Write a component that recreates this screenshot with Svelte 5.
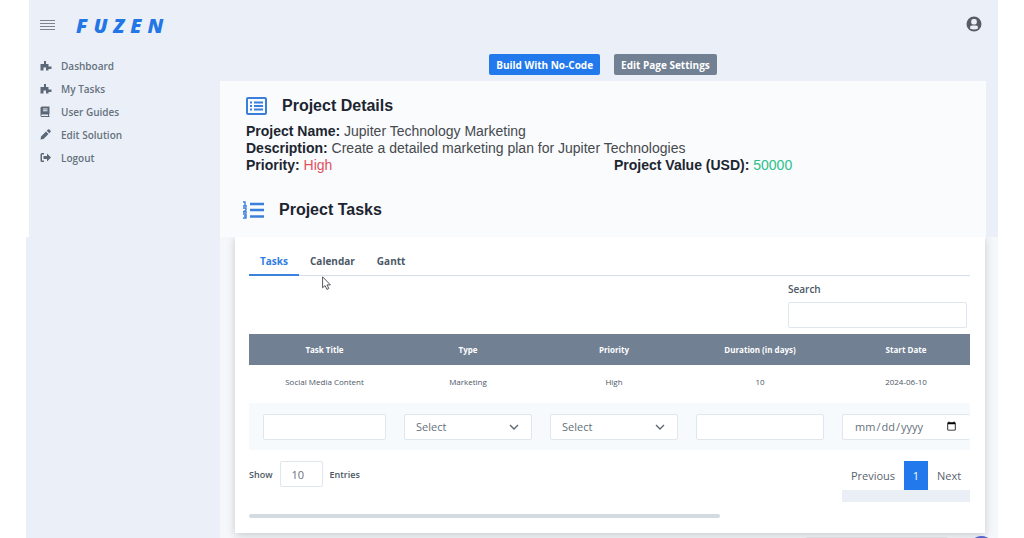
<script lang="ts">
	type Tab = 'Tasks' | 'Calendar' | 'Gantt';

	const tabs: Tab[] = ['Tasks', 'Calendar', 'Gantt'];
	const navItems = [
		{ label: 'Dashboard', icon: 'puzzle' },
		{ label: 'My Tasks', icon: 'puzzle' },
		{ label: 'User Guides', icon: 'book' },
		{ label: 'Edit Solution', icon: 'pencil' },
		{ label: 'Logout', icon: 'logout' }
	];
	const columns = ['Task Title', 'Type', 'Priority', 'Duration (in days)', 'Start Date'];
	const tasks = [
		{ title: 'Social Media Content', type: 'Marketing', priority: 'High', duration: 10, start: '2024-06-10' }
	];

	let activeTab = $state<Tab>('Tasks');
	let search = $state('');
	let pageSize = $state('10');

	let visibleTasks = $derived(
		tasks.filter((t) => t.title.toLowerCase().includes(search.toLowerCase()))
	);
</script>

{#snippet navIcon(name: string)}
	<svg class="nav-icon" viewBox="0 0 24 22" aria-hidden="true">
		{#if name === 'puzzle'}
			<path d="M1 8h7V2h4v6h5v5h6v5h-6v3h-5v-6H7v6H1z" />
		{:else if name === 'book'}
			<path fill-rule="evenodd" d="M4 1h15v15l-1 1v3h1v2H4a3 3 0 0 1-3-3V4a3 3 0 0 1 3-3zm2 4v2h9V5zm0 3.500v2h9v-2zM4 17a1.500 1.500 0 0 0 0 3h12v-3z" />
		{:else if name === 'pencil'}
			<path d="M1 21l1-6L12 5l5 5L7 20zM13.500 3.500L16 1q1.500-1 3 0l2 2q1 1.500 0 3l-2.500 2.500z" />
		{:else}
			<path d="M8 2v3H4v12h4v3H4a3 3 0 0 1-3-3V5a3 3 0 0 1 3-3zM14 3l8 8-8 8v-5H7V8h7z" />
		{/if}
	</svg>
{/snippet}

{#snippet chevron()}
	<svg class="chevron" viewBox="0 0 10 10" aria-hidden="true"><path d="M1 3l4 4 4-4" /></svg>
{/snippet}

<div class="app">
	<header class="topbar">
		<button class="icon-button" aria-label="Toggle menu">
			<svg class="menu-icon" viewBox="0 0 15 10"><path d="M0 .5h15M0 3.500h15M0 6.500h15M0 9.500h15" /></svg>
		</button>
		<a class="logo" href="#home">FUZEN</a>
		<button class="icon-button account" aria-label="Account">
			<svg class="user-icon" viewBox="0 0 16 16">
				<circle cx="8" cy="8" r="7.500" fill="#575d65" />
				<rect x="5.200" y="3" width="5.600" height="5.500" rx="2" fill="#ebf0f8" />
				<path d="M4 12.500v-1q0-2 2-2h4q2 0 2 2v1q-4 2-8 0z" fill="#ebf0f8" />
			</svg>
		</button>
	</header>

	<nav class="sidebar">
		{#each navItems as item}
			<a href="#{item.label.toLowerCase().replace(' ', '-')}">
				{@render navIcon(item.icon)}
				{item.label}
			</a>
		{/each}
	</nav>

	<main>
		<div class="actions">
			<button class="primary">Build With No-Code</button>
			<button>Edit Page Settings</button>
		</div>

		<section class="details">
			<h2>
				<svg class="head-icon" viewBox="0 0 21 18" aria-hidden="true">
					<rect x="1" y="1" width="19" height="16" rx="1" fill="none" stroke="#3b7fdc" stroke-width="2" />
					<path d="M4 5.500h2M4 9h2M4 12.500h2M8 5.500h9M8 9h9M8 12.500h9" stroke="#3b7fdc" stroke-width="1.800" />
				</svg>
				Project Details
			</h2>
			<p><b>Project Name:</b> Jupiter Technology Marketing</p>
			<p><b>Description:</b> Create a detailed marketing plan for Jupiter Technologies</p>
			<div class="split">
				<p><b>Priority:</b> <span class="high">High</span></p>
				<p><b>Project Value (USD):</b> <span class="value">50000</span></p>
			</div>
			<h2 class="tasks-title">
				<svg class="head-icon" viewBox="0 0 21 18" aria-hidden="true">
					<path d="M7 3h14M7 9h14M7 15.500h14" stroke="#3b7fdc" stroke-width="2.400" />
					<path d="M0 1h2v4M0 5h4M0 7h3v2L0 11h4M0 13h3v4H0M1 15h2" fill="none" stroke="#3b7fdc" stroke-width="1.400" />
				</svg>
				Project Tasks
			</h2>
		</section>

		<section class="board">
			<div class="card">
				<div class="tabs" role="tablist">
					{#each tabs as tab}
						<button
							role="tab"
							aria-selected={activeTab === tab}
							class:active={activeTab === tab}
							onclick={() => (activeTab = tab)}>{tab}</button
						>
					{/each}
					<svg class="cursor" viewBox="0 0 9 14" aria-hidden="true">
						<path d="M.6.800v11l2.500-2.200 1.800 3.800 1.900-.9L5 8.900h3.400z" />
					</svg>
				</div>

				<div class="search">
					<label for="search">Search</label>
					<input id="search" type="text" bind:value={search} />
				</div>

				<div class="table-wrap">
					<table>
						<thead>
							<tr>
								{#each columns as column}
									<th>{column}</th>
								{/each}
							</tr>
						</thead>
						<tbody>
							{#each visibleTasks as task}
								<tr>
									<td>{task.title}</td>
									<td>{task.type}</td>
									<td>{task.priority}</td>
									<td>{task.duration}</td>
									<td>{task.start}</td>
								</tr>
							{/each}
							<tr class="filters">
								<td><input type="text" aria-label="Task Title" /></td>
								<td>
									<div class="select">
										<select aria-label="Type"><option>Select</option><option>Marketing</option></select>
										{@render chevron()}
									</div>
								</td>
								<td>
									<div class="select">
										<select aria-label="Priority"><option>Select</option><option>High</option></select>
										{@render chevron()}
									</div>
								</td>
								<td><input type="text" aria-label="Duration (in days)" /></td>
								<td><input type="date" aria-label="Start Date" /></td>
							</tr>
						</tbody>
					</table>
				</div>

				<div class="table-footer">
					<div class="entries">
						<label for="page-size">Show</label>
						<input id="page-size" type="text" bind:value={pageSize} />
						<span>Entries</span>
					</div>
					<div class="pagination">
						<button>Previous</button>
						<button class="current">1</button>
						<button>Next</button>
					</div>
				</div>

				<div class="scrollbar"></div>
			</div>
		</section>
	</main>
</div>

<div class="status-bar"></div>
<button class="chat" aria-label="Open chat"></button>

<style>
	:global(body) {
		background: #fff;
		overflow: hidden;
	}

	.app {
		position: relative;
		display: grid;
		grid-template-columns: 191px 1fr;
		grid-template-rows: 54px 1fr;
		min-height: 100vh;
		margin: 0 26px 0 29px;
		background: #ebf0f8;
		color: #4b5866;
		font-family: 'Open Sans', 'Noto Sans', sans-serif;
		font-size: 9px;
	}

	/* page edge steps out beside the board */
	.app::before {
		content: '';
		position: absolute;
		top: 237px;
		bottom: 0;
		left: -3px;
		width: 3px;
		background: #ebf0f8;
	}

	button,
	input,
	select {
		box-sizing: border-box;
		margin: 0;
		font-family: inherit;
		color: inherit;
	}

	button {
		border: 0;
		background: none;
		cursor: pointer;
	}

	.topbar {
		grid-column: 1 / -1;
		display: flex;
		align-items: center;
		gap: 21px;
		padding: 0 16px 4px 11px;
	}

	.icon-button {
		display: flex;
		padding: 0;
	}

	.account {
		margin-left: auto;
		margin-bottom: 2px;
	}

	.menu-icon {
		width: 15px;
		height: 10px;
		stroke: #7c848e;
		stroke-width: 1;
	}

	.user-icon {
		width: 16px;
		height: 16px;
	}

	.logo {
		color: #2376e5;
		font-family: 'Open Sans', sans-serif;
		font-size: 20px;
		font-style: italic;
		font-weight: 800;
		letter-spacing: 6px;
		text-decoration: none;
	}

	.sidebar a {
		display: flex;
		align-items: center;
		gap: 9px;
		height: 23px;
		padding-left: 11px;
		color: #66717e;
		font-size: 10px;
		font-weight: 600;
		text-decoration: none;
	}

	.nav-icon {
		width: 12px;
		height: 11px;
		fill: #5c6877;
	}

	main {
		display: flex;
		flex-direction: column;
		min-width: 0;
	}

	.actions {
		display: flex;
		justify-content: center;
		gap: 14px;
		padding: 0 12px 6px 0;
	}

	.actions button {
		height: 21px;
		padding: 0 7px;
		border-radius: 2px;
		background: #718093;
		color: #fff;
		font-size: 10px;
		font-weight: 700;
	}

	.actions .primary {
		background: #2279eb;
	}

	.details {
		margin-right: 12px;
		padding: 13px 26px 16px;
		background: #f9fbfd;
		color: #46494d;
		font-family: 'Liberation Sans', Arial, sans-serif;
		font-size: 14px;
		line-height: 17px;
	}

	.details h2 {
		display: flex;
		align-items: center;
		gap: 15px;
		margin: 0 0 6px;
		color: #1d2530;
		font-size: 16px;
		line-height: 23px;
	}

	.details .tasks-title {
		margin: 24px 0 0 -3px;
	}

	.head-icon {
		width: 21px;
		height: 18px;
	}

	.details p {
		margin: 0;
	}

	.details b {
		color: #1d2530;
	}

	.split {
		display: grid;
		grid-template-columns: 368px 1fr;
	}

	.high {
		color: #e05260;
	}

	.value {
		color: #2cc08c;
	}

	.board {
		flex: 1;
		padding: 0 13px 5px 15px;
		background: #f5f7fa;
	}

	.card {
		padding: 10px 15px 15px 14px;
		background: #fff;
		box-shadow: 0 2px 8px rgba(60, 70, 80, 0.25);
		clip-path: inset(0 -13px -8px -13px);
	}

	.tabs {
		position: relative;
		display: flex;
		border-bottom: 1px solid #d3dfec;
	}

	.tabs button {
		height: 29px;
		margin-bottom: -1px;
		padding: 0 11px;
		border-bottom: 2px solid transparent;
		font-size: 10px;
		font-weight: 700;
	}

	.tabs .active {
		border-color: #3b82df;
		color: #2f7de1;
	}

	.cursor {
		position: absolute;
		top: 29px;
		left: 73px;
		width: 9px;
		height: 14px;
		fill: #fff;
		stroke: #55585c;
	}

	.search {
		display: flex;
		flex-direction: column;
		width: 179px;
		margin: 6px 3px 6px auto;
	}

	.search label {
		height: 20px;
		font-size: 10px;
		font-weight: 600;
		line-height: 14px;
	}

	.card input,
	.card select {
		width: 100%;
		height: 26px;
		padding: 0 11px;
		border: 1px solid #dfe7ee;
		border-radius: 2px;
		background: #fff;
		color: #66717c;
		font-size: 11px;
	}

	.table-wrap {
		overflow: hidden;
	}

	table {
		width: calc(100% + 9px);
		border-collapse: collapse;
		table-layout: fixed;
		text-align: center;
	}

	th,
	td {
		padding: 0 9px;
	}

	th:first-child,
	td:first-child {
		padding-left: 14px;
	}

	th {
		height: 31px;
		background: #718093;
		color: #fff;
		font-size: 8px;
		font-weight: 700;
	}

	td {
		height: 32px;
		padding-bottom: 6px;
		font-size: 8px;
	}

	.filters td {
		height: 47px;
		padding-bottom: 0;
		background: #f7fafc;
	}

	.select {
		display: grid;
		align-items: center;
	}

	.select > :global(*) {
		grid-area: 1 / 1;
	}

	.card select {
		appearance: none;
	}

	.chevron {
		justify-self: end;
		width: 10px;
		height: 10px;
		margin-right: 13px;
		fill: none;
		stroke: #5e6873;
		stroke-width: 1.4;
		pointer-events: none;
	}

	.card input[type='date'] {
		border-right: 0;
	}

	.table-footer {
		display: flex;
		justify-content: space-between;
		align-items: flex-start;
		padding-top: 11px;
	}

	.entries {
		display: flex;
		align-items: center;
		gap: 7px;
		font-weight: 600;
	}

	.entries input {
		width: 43px;
	}

	.pagination {
		display: flex;
		width: 128px;
		border-bottom: 12px solid #eaeff6;
	}

	.pagination button {
		flex: 1 0 auto;
		height: 29px;
		padding: 0 8px;
		color: #59636e;
		font-size: 11px;
	}

	.pagination .current {
		background: #2279eb;
		color: #fff;
	}

	.scrollbar {
		width: 471px;
		max-width: 100%;
		height: 4px;
		margin-top: 12px;
		border-radius: 2px;
		background: #d2dae2;
	}

	.status-bar,
	.chat {
		position: fixed;
		right: 74px;
		bottom: -9px;
		width: 147px;
		height: 10px;
		border-radius: 5px;
		background: #d7d9dc;
	}

	.chat {
		right: 30px;
		bottom: -23px;
		width: 25px;
		height: 25px;
		border-radius: 50%;
		background: #5361c9;
	}
</style>
